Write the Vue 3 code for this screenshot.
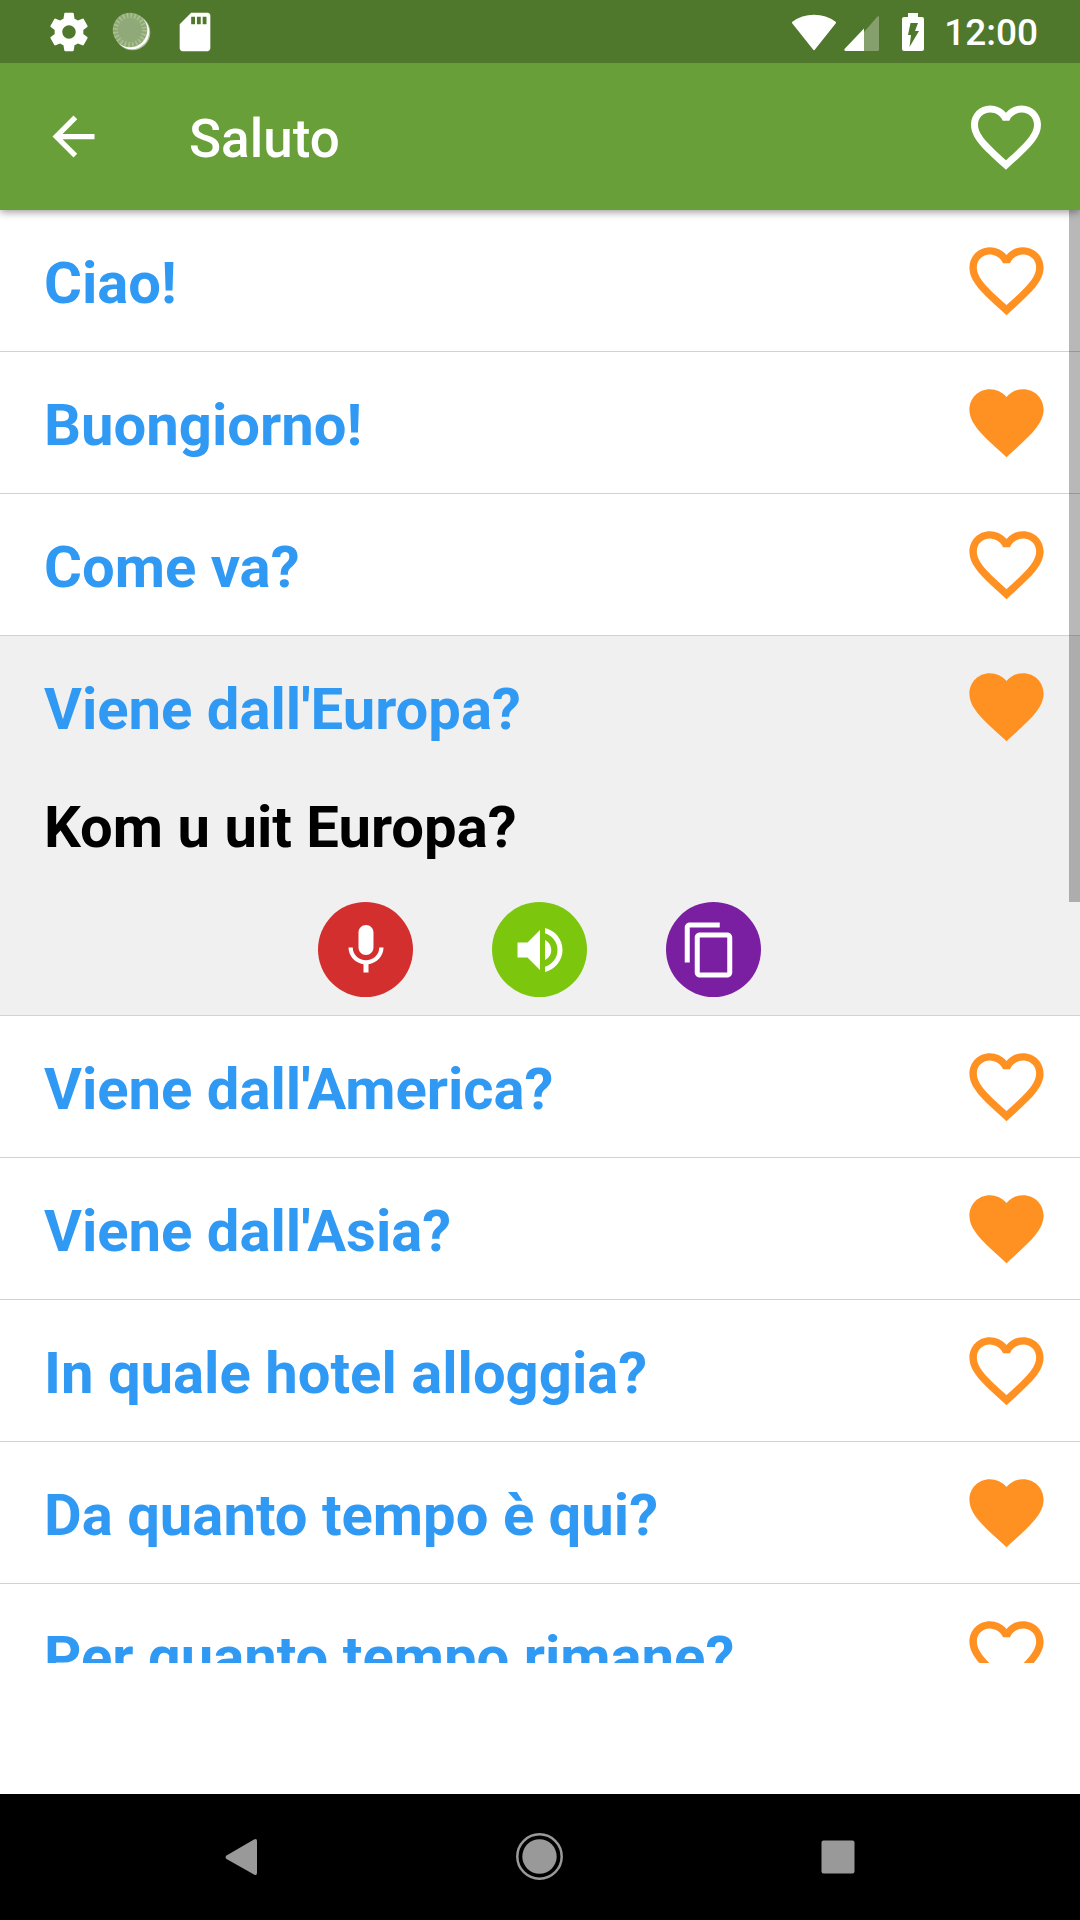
<script setup>
import { ref } from 'vue'

const phrases = ref([
  { text: 'Ciao!', favorite: false },
  { text: 'Buongiorno!', favorite: true },
  { text: 'Come va?', favorite: false },
  { text: "Viene dall'Europa?", favorite: true, translation: 'Kom u uit Europa?' },
  { text: "Viene dall'America?", favorite: false },
  { text: "Viene dall'Asia?", favorite: true },
  { text: 'In quale hotel alloggia?', favorite: false },
  { text: 'Da quanto tempo è qui?', favorite: true },
  { text: 'Per quanto tempo rimane?', favorite: false },
])

const opened = ref(3)

const heartFull =
  'M12 21.35l-1.45-1.32C5.4 15.36 2 12.28 2 8.5 2 5.42 4.42 3 7.5 3c1.74 0 3.41.81 4.5 2.09C13.09 3.81 14.76 3 16.5 3 19.58 3 22 5.42 22 8.5c0 3.78-3.4 6.86-8.55 11.54L12 21.35z'
const heartEmpty =
  'M16.5 3c-1.74 0-3.41.81-4.5 2.09C10.91 3.81 9.24 3 7.5 3 4.42 3 2 5.42 2 8.5c0 3.78 3.4 6.86 8.55 11.54L12 21.35l1.45-1.32C18.6 15.36 22 12.28 22 8.5 22 5.42 19.58 3 16.5 3zm-4.4 15.55l-.1.1-.1-.1C7.14 14.24 4 11.39 4 8.5 4 6.5 5.5 5 7.5 5c1.54 0 3.04.99 3.57 2.36h1.87C13.46 5.99 14.96 5 16.5 5c2 0 3.5 1.5 3.5 3.5 0 2.89-3.14 5.74-7.9 10.05z'
</script>

<template>
  <div class="screen">
    <div class="status">
      <div class="notices">
        <svg viewBox="0 0 24 24" fill="#fff">
          <path d="M19.43 12.98c.04-.32.07-.64.07-.98s-.03-.66-.07-.98l2.11-1.65c.19-.15.24-.42.12-.64l-2-3.46c-.12-.22-.39-.3-.61-.22l-2.49 1c-.52-.4-1.08-.73-1.69-.98l-.38-2.65C14.46 2.18 14.25 2 14 2h-4c-.25 0-.46.18-.49.42l-.38 2.65c-.61.25-1.17.59-1.69.98l-2.49-1c-.23-.09-.49 0-.61.22l-2 3.46c-.13.22-.07.49.12.64l2.11 1.65c-.04.32-.07.65-.07.98s.03.66.07.98l-2.11 1.65c-.19.15-.24.42-.12.64l2 3.46c.12.22.39.3.61.22l2.49-1c.52.4 1.08.73 1.69.98l.38 2.65c.03.24.24.42.49.42h4c.25 0 .46-.18.49-.42l.38-2.65c.61-.25 1.17-.59 1.69-.98l2.49 1c.23.09.49 0 .61-.22l2-3.46c.12-.22.07-.49-.12-.64l-2.11-1.65zM12 15.5c-1.93 0-3.5-1.57-3.5-3.5s1.57-3.5 3.5-3.5 3.5 1.57 3.5 3.5-1.57 3.5-3.5 3.5z" />
        </svg>
        <svg viewBox="0 0 46 46">
          <circle cx="23.5" cy="23.5" r="17.8" fill="#a9bd97" />
          <circle cx="22.8" cy="22.8" r="17.4" fill="#fff" />
          <circle cx="21" cy="21" r="17.3" fill="#8fa979" />
          <circle cx="21" cy="21" r="14.500" fill="none" stroke="#abc08c" stroke-width="5" stroke-dasharray="1.600 2.200" />
        </svg>
        <svg viewBox="0 0 24 24" fill="#fff">
          <path d="M18 2h-8L4.02 8 4 20.500c0 .83.67 1.500 1.500 1.500h13c.83 0 1.500-.67 1.500-1.500V3.500C20 2.670 19.330 2 18.500 2zm-6 6h-2V4h2v4zm3 0h-2V4h2v4zm3 0h-2V4h2v4z" />
        </svg>
      </div>
      <div class="signals">
        <svg viewBox="0 0 24 24" fill="#fff" stroke="#fff" stroke-linejoin="round">
          <path stroke-width="1" d="M12 21L23 7.100c-.45-.34-4.600-3.600-11-3.600S1.450 6.760 1 7.100z" />
        </svg>
        <svg viewBox="0 0 46 46">
          <path fill="#85a06c" d="M23 23 36.500 7.500q1.500-1 1.500 1V40.500q0 1.500-1.500 1.500H23z" />
          <path fill="#fff" d="M23 19.500V42H4.500q-2-.5-1-2z" />
        </svg>
        <svg viewBox="0 0 46 46">
          <path fill="#fff" d="M17 4h10v4h4q2 0 2 2v30q0 2-2 2H13q-2 0-2-2V10q0-2 2-2h4z" />
          <path fill="#50782c" d="M19.500 14h7.500l-3 8h4l-9.500 16 1.500-12h-3z" />
        </svg>
        <time>12:00</time>
      </div>
    </div>

    <header class="bar">
      <button class="back" aria-label="Indietro">
        <svg viewBox="0 0 24 24" fill="#fff"><path d="M20 11H7.830l5.590-5.590L12 4l-8 8 8 8 1.410-1.410L7.830 13H20v-2z" /></svg>
      </button>
      <h1>Saluto</h1>
      <button class="favorites" aria-label="Preferiti">
        <svg viewBox="0 0 24 24" fill="#fff"><path :d="heartEmpty" /></svg>
      </button>
    </header>

    <main class="viewport">
      <ul class="list">
        <li v-for="(item, i) in phrases" :key="item.text" :class="{ open: item.translation && opened === i }">
          <div class="row">
            <button class="phrase" @click="opened = i">{{ item.text }}</button>
            <button class="heart" aria-label="Preferito" :aria-pressed="item.favorite" @click="item.favorite = !item.favorite">
              <svg viewBox="0 0 24 24" fill="#ff9122"><path :d="item.favorite ? heartFull : heartEmpty" /></svg>
            </button>
          </div>
          <template v-if="item.translation && opened === i">
            <p class="translation">{{ item.translation }}</p>
            <div class="actions">
              <button class="record" aria-label="Registra">
                <svg viewBox="0 0 24 24"><path d="M12 14c1.660 0 2.990-1.340 2.990-3L15 5c0-1.660-1.340-3-3-3S9 3.340 9 5v6c0 1.660 1.340 3 3 3zm5.300-3c0 3-2.540 5.100-5.300 5.100S6.700 14 6.700 11H5c0 3.410 2.720 6.230 6 6.720V21h2v-3.280c3.280-.48 6-3.300 6-6.720h-1.700z" /></svg>
              </button>
              <button class="listen" aria-label="Ascolta">
                <svg viewBox="0 0 24 24"><path d="M3 9v6h4l5 5V4L7 9H3zm13.500 3c0-1.770-1.020-3.290-2.500-4.030v8.050c1.480-.73 2.500-2.250 2.500-4.020zM14 3.230v2.060c2.890.86 5 3.540 5 6.710s-2.110 5.850-5 6.710v2.060c4.010-.91 7-4.490 7-8.770s-2.990-7.860-7-8.770z" /></svg>
              </button>
              <button class="copy" aria-label="Copia">
                <svg viewBox="1.7 0 24 24"><path d="M16 1H4c-1.100 0-2 .9-2 2v14h2V3h12V1zm3 4H8c-1.100 0-2 .9-2 2v14c0 1.100.9 2 2 2h11c1.100 0 2-.9 2-2V7c0-1.100-.9-2-2-2zm0 16H8V7h11v14z" /></svg>
              </button>
            </div>
          </template>
        </li>
      </ul>
      <div class="thumb"></div>
    </main>

    <nav class="keys">
      <button aria-label="Back">
        <svg viewBox="0 0 48 48"><path fill="#999" d="M8.500 22.500 36 6.500q3-1.500 3 1.500V40q0 3-3 1.500L8.500 26q-2-1.700 0-3.500z" /></svg>
      </button>
      <button aria-label="Home">
        <svg viewBox="0 0 48 48"><circle cx="23.500" cy="23.500" r="22.200" fill="none" stroke="#999" stroke-width="2.500" /><circle cx="23.500" cy="23.500" r="17.200" fill="#999" /></svg>
      </button>
      <button aria-label="Recents">
        <svg viewBox="0 0 48 48"><rect x="7.500" y="7.500" width="33" height="33" rx="2" fill="#999" /></svg>
      </button>
    </nav>
  </div>
</template>

<style>
body {
  margin: 0;
  background: #fff;
}
</style>

<style scoped>
.screen {
  display: flex;
  flex-direction: column;
  height: 100vh;
  font-family: Roboto, "Noto Sans", sans-serif;
}
button {
  border: 0;
  padding: 0;
  background: none;
  font: inherit;
  color: inherit;
  cursor: pointer;
}
svg {
  display: block;
}
.status {
  flex: none;
  z-index: 2;
  display: flex;
  justify-content: space-between;
  align-items: center;
  box-sizing: border-box;
  height: 63px;
  padding: 0 42px 0 46px;
  background: #50782c;
}
.notices,
.signals {
  display: flex;
  align-items: center;
}
.notices {
  gap: 17px;
}
.signals {
  gap: 4px;
}
.status svg {
  width: 46px;
  height: 46px;
}
time {
  padding-top: 2px;
  padding-left: 3px;
  font-size: 37px;
  line-height: 44px;
  font-weight: 500;
  color: #fff;
}
.bar {
  flex: none;
  z-index: 1;
  display: flex;
  align-items: center;
  box-sizing: border-box;
  height: 147px;
  padding: 0 32px 0 42px;
  background: #689f38;
  box-shadow: 0 2px 8px rgba(0, 0, 0, 0.4);
  color: #fff;
}
.back svg {
  width: 63px;
  height: 63px;
}
h1 {
  flex: 1;
  margin: 0;
  padding-top: 4px;
  padding-left: 84px;
  font-size: 53px;
  line-height: 60px;
  font-weight: 500;
}
.favorites svg {
  width: 84px;
  height: 84px;
}
.viewport {
  position: relative;
  flex: 1;
  min-height: 0;
  margin-bottom: 131px;
  overflow: hidden;
}
.list {
  margin: 0;
  padding: 0;
  list-style: none;
}
.list li {
  border-bottom: 1px solid #d2d2d2;
}
.open {
  background: #f0f0f0;
}
.row {
  display: flex;
  align-items: center;
  justify-content: space-between;
  height: 141px;
  padding: 0 29px 0 44px;
}
.phrase,
.translation {
  font-size: 58px;
  line-height: 68px;
  font-weight: 700;
  text-align: left;
}
.phrase {
  flex: 1;
  padding-top: 4px;
  color: #2f99f3;
}
.heart svg {
  width: 89px;
  height: 89px;
}
.translation {
  margin: 0;
  padding: 16px 44px 0;
  color: #000;
}
.actions {
  display: flex;
  justify-content: center;
  gap: 79px;
  padding: 41px 1px 18px 0;
}
.actions button {
  display: flex;
  align-items: center;
  justify-content: center;
  width: 95px;
  height: 95px;
  border-radius: 50%;
}
.actions svg {
  width: 60px;
  height: 60px;
  fill: #fff;
}
.record {
  background: #d32f2f;
}
.listen {
  background: #7cc70d;
}
.copy {
  background: #7b1fa2;
}
.thumb {
  position: absolute;
  top: 0;
  right: 0;
  width: 11px;
  height: 47.6%;
  background: rgba(0, 0, 0, 0.28);
}
.keys {
  flex: none;
  display: flex;
  box-sizing: border-box;
  height: 126px;
  padding: 0 93px;
  background: #000;
}
.keys button {
  flex: 1;
  display: flex;
  align-items: center;
  justify-content: center;
}
.keys svg {
  width: 48px;
  height: 48px;
}
</style>
